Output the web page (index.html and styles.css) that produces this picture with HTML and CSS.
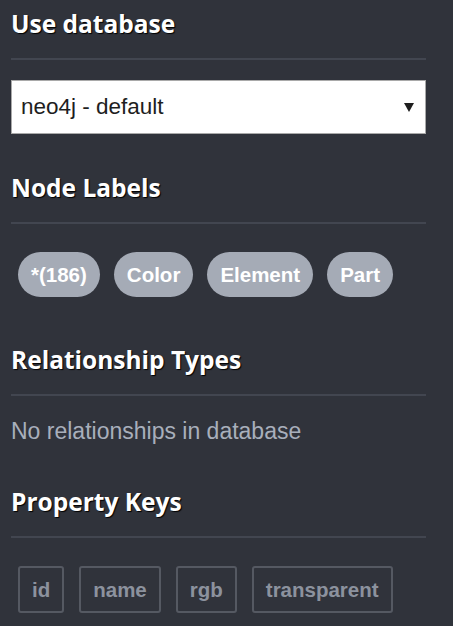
FILE: index.html
```html
<!DOCTYPE html>
<html>
<head>
<meta charset="utf-8">
<link rel="stylesheet" href="styles.css">
</head>
<body>
<div class="drawer">
  <section class="sec sec-db">
    <h2 class="sec-title">Use database</h2>
    <div class="select">
      <span class="select-text">neo4j - default</span>
      <svg class="select-arrow" width="10" height="9" viewBox="0 0 10 9"><polygon points="0,0 10,0 5,9" fill="#1e1e1e"/></svg>
    </div>
  </section>
  <section class="sec sec-labels">
    <h2 class="sec-title">Node Labels</h2>
    <div class="chips">
      <span class="chip">*(186)</span>
      <span class="chip">Color</span>
      <span class="chip">Element</span>
      <span class="chip">Part</span>
    </div>
  </section>
  <section class="sec sec-rels">
    <h2 class="sec-title">Relationship Types</h2>
    <p class="empty">No relationships in database</p>
  </section>
  <section class="sec sec-keys">
    <h2 class="sec-title">Property Keys</h2>
    <div class="keys">
      <span class="key">id</span>
      <span class="key">name</span>
      <span class="key">rgb</span>
      <span class="key">transparent</span>
    </div>
  </section>
</div>
</body>
</html>
```

FILE: styles.css
```css
html, body {
  margin: 0;
  padding: 0;
  background: #30333b;
}
.drawer {
  width: 415px;
  padding: 8px 0 0 11px;
}
.sec-title {
  margin: 0;
  font-family: "Open Sans", "DejaVu Sans", sans-serif;
  font-weight: 700;
  font-size: 24.5px;
  line-height: 32px;
  color: #ffffff;
  text-shadow: 1px 1px 1px #000;
  padding-bottom: 18px;
  border-bottom: 2px solid #424650;
}
.sec-labels { margin-top: 38px; }
.sec-rels { margin-top: 47px; }
.sec-keys { margin-top: 42px; }

.select {
  margin-top: 20px;
  height: 52px;
  background: #fff;
  border: 1px solid #a9a9a9;
  display: flex;
  align-items: center;
  justify-content: space-between;
  padding: 0 11px 0 9px;
}
.select-text {
  font-family: "Liberation Sans", Arial, sans-serif;
  font-size: 22.5px;
  color: #1e1e1e;
}
.select-arrow { display: block; margin-top: 1px; }

.chips {
  margin-top: 28px;
  padding-left: 7px;
  display: flex;
  gap: 14px;
}
.chip {
  background: #a5abb6;
  color: #fff;
  border-radius: 23px;
  height: 45px;
  padding: 0 13px;
  display: flex;
  align-items: center;
  font-family: "Liberation Sans", Arial, sans-serif;
  font-weight: 700;
  font-size: 20.5px;
}

.empty {
  margin: 22px 0 0;
  font-family: "Liberation Sans", Arial, sans-serif;
  font-size: 23px;
  line-height: 26px;
  color: #a8afbb;
}

.keys {
  margin-top: 28px;
  padding-left: 7px;
  display: flex;
  gap: 15px;
}
.key {
  border: 2px solid #555962;
  border-radius: 3px;
  height: 43px;
  padding: 0 12px;
  display: flex;
  align-items: center;
  font-family: "Liberation Sans", Arial, sans-serif;
  font-weight: 700;
  font-size: 20.5px;
  color: #8c929e;
}
```
